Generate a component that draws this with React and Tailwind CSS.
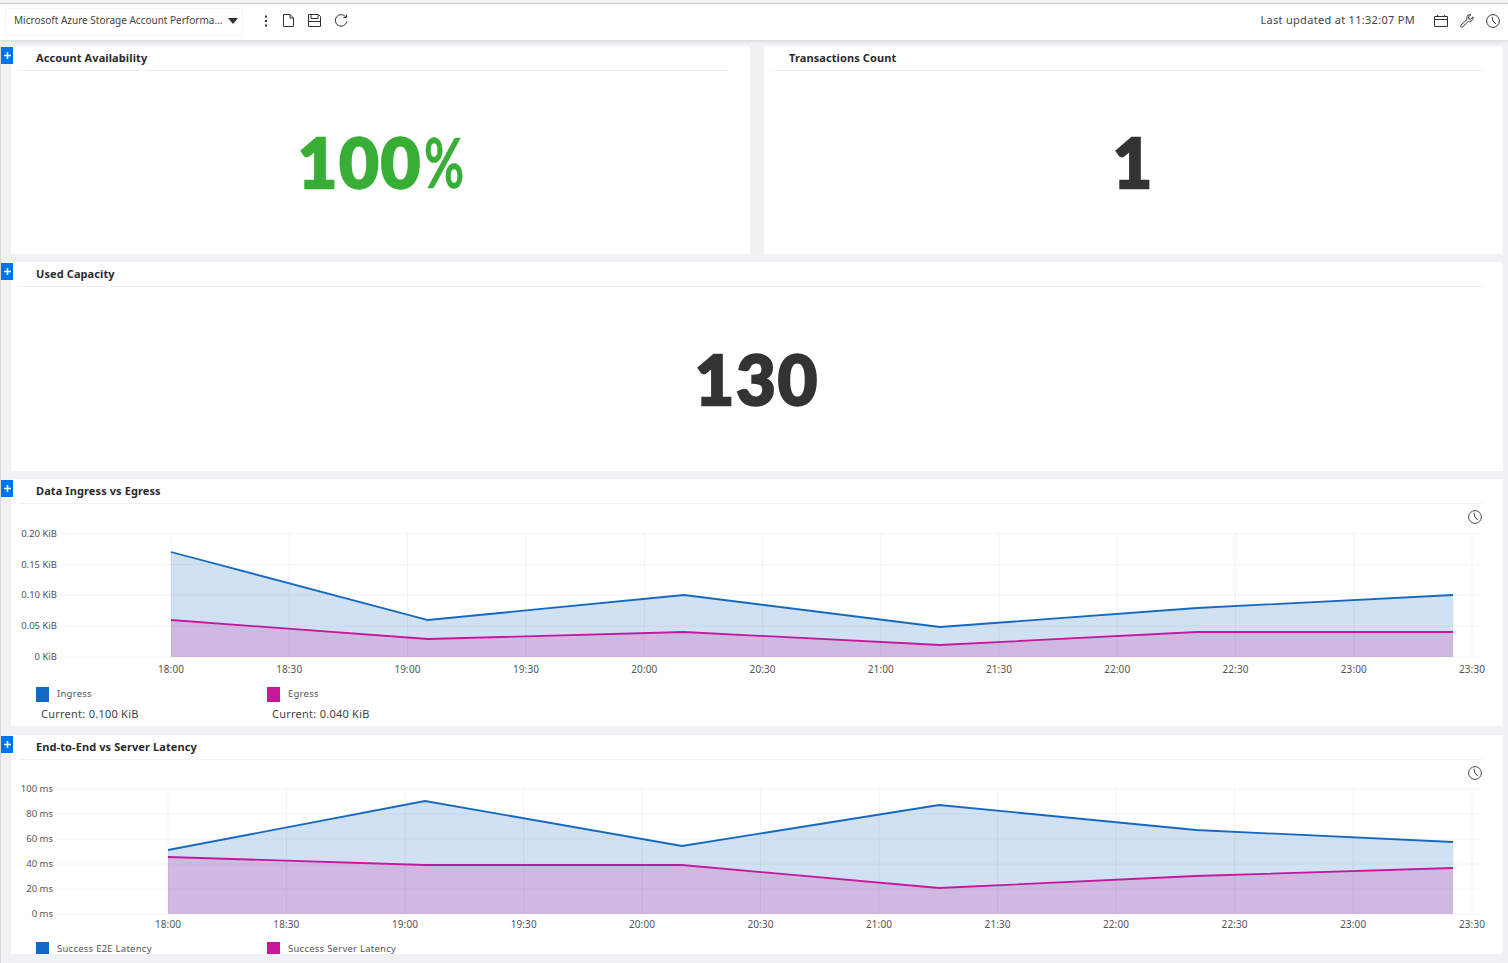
import React from "react";

const font = { fontFamily: '"Noto Sans", "Open Sans", sans-serif' };

function MoreIcon() {
  return (
    <svg width="4" height="12" viewBox="0 0 4 12" fill="#333">
      <rect x="1" y="0.5" width="2" height="2" />
      <rect x="1" y="5" width="2" height="2" />
      <rect x="1" y="9.5" width="2" height="2" />
    </svg>
  );
}
function FileIcon() {
  return (
    <svg width="11" height="13" viewBox="0 0 11 13" fill="none" stroke="#333" strokeWidth="1">
      <path d="M.5 .5H7L10.5 4V12.5H.5Z M7 .5V4H10.5" />
    </svg>
  );
}
function SaveIcon() {
  return (
    <svg width="13" height="13" viewBox="0 0 13 13" fill="none" stroke="#333" strokeWidth="1">
      <path d="M.5 .5H10.5L12.5 2.5V12.5H.5Z" />
      <path d="M3 .5V4.5H10V.5" />
      <path d="M.5 7.5H12.5" />
    </svg>
  );
}
function RefreshIcon() {
  return (
    <svg width="14" height="14" viewBox="0 0 14 14" fill="none" stroke="#333" strokeWidth="1">
      <path d="M11.8 3A5.8 5.8 0 1 0 12.8 7.5" />
      <path d="M12.5 .5V3.5H9.5" />
    </svg>
  );
}
function CalendarIcon() {
  return (
    <svg width="14" height="12" viewBox="0 0 14 12" fill="none" stroke="#333" strokeWidth="1">
      <path d="M.5 1.5H13.5V11.5H.5Z M.5 4.5H13.5" />
      <path d="M3.5 0V1.5M10.5 0V1.5" />
    </svg>
  );
}
function WrenchIcon() {
  return (
    <svg width="14" height="14" viewBox="0 0 14 14" fill="none" stroke="#333" strokeWidth="1">
      <path d="M13 2.8L10.6 5.2L8.8 4.8L8.4 3L10.8 .8C8.8 .1 6.6 1.5 6.8 4.2C6.8 4.8 6.9 5.2 7 5.5L.9 11.2C.2 12 .5 12.8 1 13.1C1.6 13.6 2.3 13.4 2.8 12.9L8.5 7.1C11 8 13.8 6 13 2.8Z" />
    </svg>
  );
}
function ClockIcon() {
  return (
    <svg width="14" height="14" viewBox="0 0 14 14" fill="none" stroke="#333" strokeWidth="1">
      <circle cx="7" cy="7" r="6.4" />
      <path d="M6 2.8L7 7L9.8 10" />
    </svg>
  );
}
function PlusBadge() {
  return (
    <div className="absolute left-[1px] top-[1px] flex h-[17px] w-[12px] items-center justify-center bg-[#0073e7] pl-[1px]">
      <svg width="7" height="7" viewBox="0 0 7 7" fill="none" stroke="#fff" strokeWidth="1.6">
        <path d="M3.5 0V7M0 3.5H7" />
      </svg>
    </div>
  );
}
function Header({ title }) {
  return (
    <div className="ml-[8px] mr-[21px] flex h-[25px] items-center border-b border-[#f0f1f2] pl-[17px] text-[11px] font-bold tracking-[0.1px] text-[#2b2b2b]">
      {title}
    </div>
  );
}
function BigPanel({ title, value, suffix, color, className }) {
  return (
    <div className={"flex flex-col bg-white " + className}>
      <Header title={title} />
      <div
        className="flex flex-1 items-center justify-center pb-[1px] text-[68px] font-black leading-none tracking-[2px] [-webkit-text-stroke:2.4px_currentColor]"
        style={{ color, fontFamily: 'Lato, "Open Sans", sans-serif' }}
      >
        <span>{value}</span>
        {suffix && (
          <span className="ml-[2px] inline-block w-[39px] origin-left scale-x-[0.72] whitespace-nowrap font-bold tracking-normal [-webkit-text-stroke:0.5px_currentColor]">
            {suffix}
          </span>
        )}
      </div>
    </div>
  );
}
function Legend({ swatch, label, current, width }) {
  return (
    <div className={width}>
      <div className="flex h-[16px] items-center">
        <span className="h-[15px] w-[13px]" style={{ background: swatch }} />
        <span className="ml-[8px] text-[9.5px] tracking-[0.25px] text-[#555]">{label}</span>
      </div>
      {current && (
        <div className="mt-[4px] pl-[5px] text-[11px] leading-[16px] tracking-[0.25px] text-[#444]">{current}</div>
      )}
    </div>
  );
}
function Chart({ top, height, xs, ys, yLabels, xLabelY, labelRight, a, b }) {
  const bottom = ys[ys.length - 1];
  const area = (pts) => `M${pts[0][0]} ${bottom}L${pts.map((p) => p.join(" ")).join("L")}L${pts[pts.length - 1][0]} ${bottom}Z`;
  const line = (pts) => `M${pts.map((p) => p.join(" ")).join("L")}`;
  const times = ["18:00", "18:30", "19:00", "19:30", "20:00", "20:30", "21:00", "21:30", "22:00", "22:30", "23:00", "23:30"];
  return (
    <svg width="1492" height={height} viewBox={`11 ${top} 1492 ${height}`} className="block">
      {ys.map((y) => (
        <line key={y} x1={labelRight + 3} x2="1481" y1={y} y2={y} stroke="#f3f4f5" />
      ))}
      {xs.map((x) => (
        <line key={x} x1={x} x2={x} y1={ys[0]} y2={bottom} stroke="#f1f2f4" />
      ))}
      <path d={area(a)} fill="#1668c1" fillOpacity="0.2" />
      <path d={area(b)} fill="#c6179d" fillOpacity="0.2" />
      <path d={line(a)} fill="none" stroke="#1668c1" strokeWidth="1.8" />
      <path d={line(b)} fill="none" stroke="#c6179d" strokeWidth="1.8" />
      {ys.map((y, i) => (
        <text key={y} x={labelRight} y={y + 3} textAnchor="end" fontSize="9.5" fill="#555" style={font}>
          {yLabels[i]}
        </text>
      ))}
      {xs.map((x, i) => (
        <text key={x} x={x} y={xLabelY} textAnchor="middle" fontSize="10" letterSpacing="0.1" fill="#555" style={font}>
          {times[i]}
        </text>
      ))}
    </svg>
  );
}
function ChartPanel({ title, className, chart, legend }) {
  return (
    <div className={"relative shrink-0 overflow-hidden bg-white " + className}>
      <Header title={title} />
      <div className="absolute left-[1457px] top-[31px]">
        <svg width="14" height="14" viewBox="0 0 14 14" fill="none" stroke="#444" strokeWidth="1">
          <circle cx="7" cy="7" r="6.4" />
          <path d="M6 2.8L7 7L9.8 10" />
        </svg>
      </div>
      {chart}
      <div className="ml-[25px] flex">{legend}</div>
    </div>
  );
}

export default function App() {
  const xs1 = [171, 289.2, 407.5, 526, 644.3, 762.6, 880.8, 999, 1117.2, 1235.5, 1353.8, 1472];
  const xs2 = [168, 286.4, 405, 523.7, 642, 760.5, 879, 997.6, 1116, 1234.6, 1353.2, 1472];
  return (
    <div className="h-[963px] w-[1508px] overflow-hidden bg-[#eff1f3] text-[#333]" style={font}>
      <div className="h-[4px] border-b border-[#c9c9c9] bg-[#f4f4f4]" />
      <header className="flex h-[36px] items-center bg-white shadow-[0_1px_3px_rgba(0,0,0,0.12)]">
        <div className="ml-[5px] flex h-[28px] w-[238px] items-center justify-between rounded-[2px] border border-[#f3f3f3] pb-[2px] pl-[8px] pr-[4px]">
          <span className="mb-[1px] whitespace-nowrap text-[10px] tracking-normal text-[#444]">Microsoft Azure Storage Account Performa...</span>
          <svg width="10" height="6" viewBox="0 0 10 6" fill="#333">
            <path d="M0 0H10L5 6Z" />
          </svg>
        </div>
        <div className="mb-[3px] ml-[21px] flex items-center">
          <MoreIcon />
          <div className="ml-[15px]"><FileIcon /></div>
          <div className="ml-[14px]"><SaveIcon /></div>
          <div className="ml-[13px]"><RefreshIcon /></div>
        </div>
        <div className="mb-[3px] ml-auto flex items-center pr-[8px]">
          <span className="text-[11px] tracking-[0.3px] text-[#444]">Last updated at 11:32:07 PM</span>
          <div className="ml-[19px]"><CalendarIcon /></div>
          <div className="ml-[12px]"><WrenchIcon /></div>
          <div className="ml-[12px]"><ClockIcon /></div>
        </div>
      </header>

      <main className="relative ml-[11px] mr-[5px] mt-[6px] flex flex-col">
        <div className="absolute left-[-11px] top-0 h-[920px] w-[1px] bg-[#d8d8d8]" />
        <div className="relative flex h-[208px] gap-[14px]">
          <BigPanel title="Account Availability" value="100" suffix="%" color="#39ae37" className="w-[739px]" />
          <BigPanel title="Transactions Count" value="1" color="#333333" className="w-[739px]" />
          <div className="absolute left-[-11px] top-0"><PlusBadge /></div>
        </div>
        <div className="relative mt-[8px] flex h-[209px]">
          <BigPanel title="Used Capacity" value="130" color="#333333" className="w-full" />
          <div className="absolute left-[-11px] top-0"><PlusBadge /></div>
        </div>
        <div className="relative mt-[8px]">
          <ChartPanel
            title="Data Ingress vs Egress"
            className="h-[247px]"
            chart={
              <Chart
                top={504}
                height={182}
                xs={xs1}
                ys={[533.5, 564.5, 595, 626, 657]}
                yLabels={["0.20 KiB", "0.15 KiB", "0.10 KiB", "0.05 KiB", "0 KiB"]}
                xLabelY={673}
                labelRight={57}
                a={[[171, 552], [428, 620], [684, 595], [940, 627], [1197, 608], [1453, 595]]}
                b={[[171, 620], [428, 639], [684, 632], [940, 645], [1197, 632], [1453, 632]]}
              />
            }
            legend={
              <>
                <Legend swatch="#1668c1" label="Ingress" current="Current: 0.100 KiB" width="w-[231px]" />
                <Legend swatch="#c6179d" label="Egress" current="Current: 0.040 KiB" width="w-[231px]" />
              </>
            }
          />
          <div className="absolute left-[-11px] top-0"><PlusBadge /></div>
        </div>
        <div className="relative mt-[9px]">
          <ChartPanel
            title="End-to-End vs Server Latency"
            className="h-[219px]"
            chart={
              <Chart
                top={760}
                height={181}
                xs={xs2}
                ys={[789, 814, 839, 864, 889, 914]}
                yLabels={["100 ms", "80 ms", "60 ms", "40 ms", "20 ms", "0 ms"]}
                xLabelY={928}
                labelRight={53}
                a={[[168, 850], [425, 801], [682, 846], [939, 805], [1196, 830], [1453, 842]]}
                b={[[168, 857], [425, 865], [682, 865], [939, 888], [1196, 876], [1453, 868]]}
              />
            }
            legend={
              <>
                <Legend swatch="#1668c1" label="Success E2E Latency" width="w-[231px]" />
                <Legend swatch="#c6179d" label="Success Server Latency" width="w-[231px]" />
              </>
            }
          />
          <div className="absolute left-[-11px] top-0"><PlusBadge /></div>
        </div>
      </main>
    </div>
  );
}
